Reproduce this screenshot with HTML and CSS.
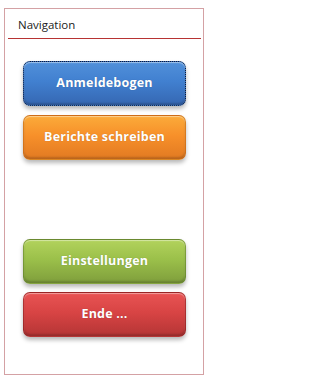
FILE: index.html
```html
<!DOCTYPE html>
<html>
<head>
<meta charset="utf-8">
<link rel="stylesheet" href="styles.css">
</head>
<body>
<div class="panel">
  <div class="header"><span class="title">Navigation</span></div>
  <div class="buttons">
    <button class="btn blue focused">Anmeldebogen</button>
    <button class="btn orange">Berichte schreiben</button>
    <div class="spacer"></div>
    <button class="btn green">Einstellungen</button>
    <button class="btn red">Ende ...</button>
  </div>
</div>
</body>
</html>
```
FILE: styles.css
```css
html, body { margin: 0; padding: 0; background: #ffffff; }
body { width: 207px; height: 382px; overflow: hidden; }
.panel {
  box-sizing: border-box;
  margin: 8px 0 0 4px;
  width: 200px;
  height: 367px;
  border: 1px solid #d4a1a4;
  padding: 0 2px 0 3px;
}
.header {
  height: 29px;
  border-bottom: 1px solid #b73333;
  display: flex;
  align-items: center;
  padding-left: 10px;
}
.title {
  font-family: "Open Sans", "DejaVu Sans", sans-serif;
  font-size: 11.5px;
  color: #222;
  position: relative;
  top: 1px;
}
.buttons {
  display: flex;
  flex-direction: column;
  gap: 9px;
  padding: 22px 0 0 15px;
}
.spacer { height: 61px; flex: none; }
.btn {
  box-sizing: border-box;
  width: 163px;
  height: 45px;
  flex: none;
  margin: 0;
  border-radius: 7px;
  border: 1px solid rgba(0,0,0,0.25);
  color: #fff;
  font-family: "Open Sans", "DejaVu Sans", sans-serif;
  font-weight: 700;
  font-size: 12.5px;
  letter-spacing: 0.2px;
  text-shadow: 0 0 1px rgba(0,0,0,0.25);
  padding: 0 0 2px 0;
  box-shadow: 0 3px 4px rgba(0,0,0,0.28), inset 0 1px 1px rgba(255,255,255,0.45), inset 0 -2px 2px rgba(0,0,0,0.18);
}
.green + .red { margin-top: -1px; }
.blue { background: linear-gradient(#5190da 0%, #4180d0 45%, #3567b2 100%); }
.focused { border: 1px dotted #0c1a3a; }
.orange { background: linear-gradient(#fbab3a 0%, #f7902a 45%, #e27a22 100%); border-color: rgba(180,90,10,0.45); }
.green { background: linear-gradient(#b2d25c 0%, #9bc04a 45%, #7f9e3c 100%); border-color: rgba(80,110,30,0.45); }
.red { background: linear-gradient(#e85454 0%, #d84444 45%, #b53535 100%); border-color: rgba(120,20,20,0.45); }
```
